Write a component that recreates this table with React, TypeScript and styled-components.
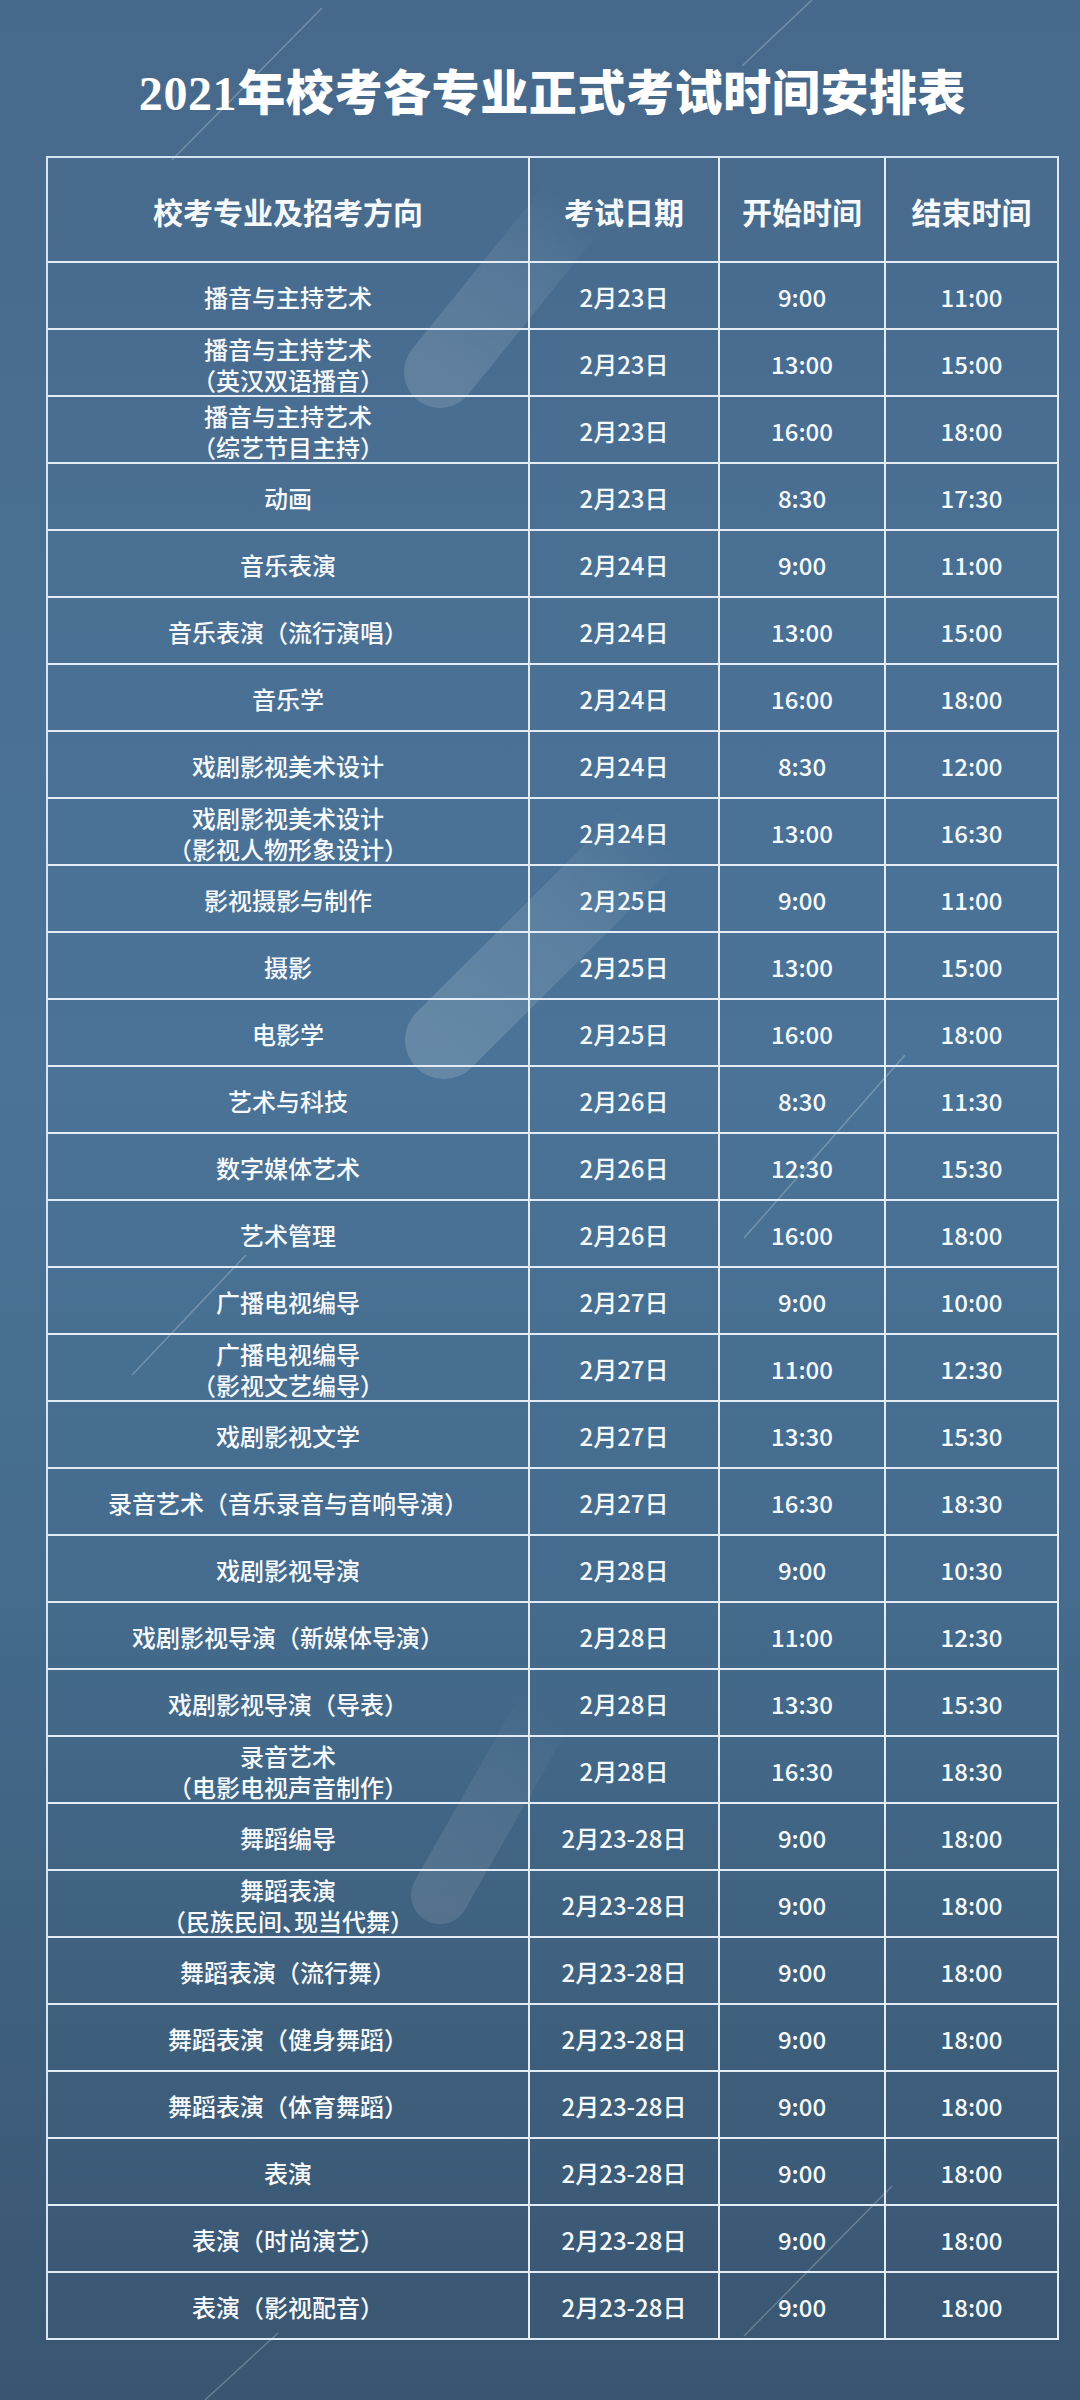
import React from 'react';
import styled, { createGlobalStyle } from 'styled-components';

const GlobalStyle = createGlobalStyle`
  html, body {
    margin: 0;
    padding: 0;
    background: #3d5d7a;
  }
  * {
    box-sizing: border-box;
  }
`;

const Page = styled.div`
  position: relative;
  width: 1080px;
  height: 2400px;
  overflow: hidden;
  padding-left: 46px;
  background: linear-gradient(
    180deg,
    #47698b 0%,
    #4a7195 30%,
    #4a7397 45%,
    #456c8e 65%,
    #3e5f7c 85%,
    #395571 100%
  );
  font-family: 'Noto Sans CJK SC', 'Noto Sans', sans-serif;
  color: #f6f9fc;
`;

const Decor = styled.svg`
  position: absolute;
  left: 0;
  top: 0;
  width: 1080px;
  height: 2400px;
  pointer-events: none;
`;

const Content = styled.div`
  position: relative;
  width: 1013px;
`;

const Title = styled.h1`
  margin: 0;
  padding-top: 70px;
  height: 118px;
  font-family: 'Liberation Serif', 'Noto Sans CJK SC', serif;
  font-size: 48px;
  line-height: 48px;
  font-weight: 900;
  letter-spacing: 0.6px;
  text-align: center;
  color: #ffffff;
  white-space: nowrap;
`;

const Table = styled.div`
  margin-top: 38px;
  display: grid;
  grid-template-columns: 482px 190px 166px 173px;
  border-top: 2px solid #d5e4f1;
  border-left: 2px solid #d5e4f1;
`;

const Cell = styled.div<{ $head?: boolean }>`
  display: flex;
  flex-direction: column;
  align-items: center;
  justify-content: center;
  height: ${(p) => (p.$head ? '105px' : '67px')};
  border-right: 2px solid #e4edf5;
  border-bottom: 2px solid #e4edf5;
  text-align: center;
  white-space: nowrap;
  font-size: ${(p) => (p.$head ? '30px' : '24px')};
  font-weight: ${(p) => (p.$head ? 700 : 500)};
  line-height: 31px;
  padding-top: ${(p) => (p.$head ? '4px' : '2px')};
`;

const Line = styled.span<{ $halt?: boolean }>`
  display: block;
  font-feature-settings: ${(p) => (p.$halt ? "'halt'" : 'normal')};
`;

type Row = [string[], string, string, string];

const rows: Row[] = [
  [['播音与主持艺术'], '2月23日', '9:00', '11:00'],
  [['播音与主持艺术', '（英汉双语播音）'], '2月23日', '13:00', '15:00'],
  [['播音与主持艺术', '（综艺节目主持）'], '2月23日', '16:00', '18:00'],
  [['动画'], '2月23日', '8:30', '17:30'],
  [['音乐表演'], '2月24日', '9:00', '11:00'],
  [['音乐表演（流行演唱）'], '2月24日', '13:00', '15:00'],
  [['音乐学'], '2月24日', '16:00', '18:00'],
  [['戏剧影视美术设计'], '2月24日', '8:30', '12:00'],
  [['戏剧影视美术设计', '（影视人物形象设计）'], '2月24日', '13:00', '16:30'],
  [['影视摄影与制作'], '2月25日', '9:00', '11:00'],
  [['摄影'], '2月25日', '13:00', '15:00'],
  [['电影学'], '2月25日', '16:00', '18:00'],
  [['艺术与科技'], '2月26日', '8:30', '11:30'],
  [['数字媒体艺术'], '2月26日', '12:30', '15:30'],
  [['艺术管理'], '2月26日', '16:00', '18:00'],
  [['广播电视编导'], '2月27日', '9:00', '10:00'],
  [['广播电视编导', '（影视文艺编导）'], '2月27日', '11:00', '12:30'],
  [['戏剧影视文学'], '2月27日', '13:30', '15:30'],
  [['录音艺术（音乐录音与音响导演）'], '2月27日', '16:30', '18:30'],
  [['戏剧影视导演'], '2月28日', '9:00', '10:30'],
  [['戏剧影视导演（新媒体导演）'], '2月28日', '11:00', '12:30'],
  [['戏剧影视导演（导表）'], '2月28日', '13:30', '15:30'],
  [['录音艺术', '（电影电视声音制作）'], '2月28日', '16:30', '18:30'],
  [['舞蹈编导'], '2月23-28日', '9:00', '18:00'],
  [['舞蹈表演', '（民族民间、现当代舞）'], '2月23-28日', '9:00', '18:00'],
  [['舞蹈表演（流行舞）'], '2月23-28日', '9:00', '18:00'],
  [['舞蹈表演（健身舞蹈）'], '2月23-28日', '9:00', '18:00'],
  [['舞蹈表演（体育舞蹈）'], '2月23-28日', '9:00', '18:00'],
  [['表演'], '2月23-28日', '9:00', '18:00'],
  [['表演（时尚演艺）'], '2月23-28日', '9:00', '18:00'],
  [['表演（影视配音）'], '2月23-28日', '9:00', '18:00'],
];

const headers = ['校考专业及招考方向', '考试日期', '开始时间', '结束时间'];

// soft diagonal light streaks behind the table
const bars = [
  { id: 'a', x1: 440, y1: 372, x2: 575, y2: 205, w: 72, o: 0.13 },
  { id: 'b', x1: 444, y1: 1040, x2: 655, y2: 830, w: 78, o: 0.15 },
  { id: 'c', x1: 440, y1: 1895, x2: 548, y2: 1705, w: 58, o: 0.1 },
];

const streaks = [
  [812, 0, 742, 66],
  [322, 8, 172, 160],
  [246, 1255, 132, 1375],
  [905, 1055, 744, 1238],
  [892, 2186, 744, 2336],
  [278, 2333, 205, 2400],
];

const Background = () => (
  <Decor viewBox="0 0 1080 2400">
    <defs>
      {bars.map((b) => (
        <linearGradient
          key={b.id}
          id={`bar-${b.id}`}
          gradientUnits="userSpaceOnUse"
          x1={b.x1}
          y1={b.y1}
          x2={b.x2}
          y2={b.y2}
        >
          <stop offset="0" stopColor="#ffffff" stopOpacity={b.o} />
          <stop offset="0.6" stopColor="#ffffff" stopOpacity={b.o * 0.6} />
          <stop offset="1" stopColor="#ffffff" stopOpacity="0" />
        </linearGradient>
      ))}
    </defs>
    {bars.map((b) => (
      <line
        key={b.id}
        x1={b.x1}
        y1={b.y1}
        x2={b.x2}
        y2={b.y2}
        stroke={`url(#bar-${b.id})`}
        strokeWidth={b.w}
        strokeLinecap="round"
      />
    ))}
    {streaks.map(([x1, y1, x2, y2], i) => (
      <line
        key={i}
        x1={x1}
        y1={y1}
        x2={x2}
        y2={y2}
        stroke="#ffffff"
        strokeOpacity="0.24"
        strokeWidth="1.5"
      />
    ))}
  </Decor>
);

const App: React.FC = () => {
  return (
    <>
      <GlobalStyle />
      <Page>
        <Background />
        <Content>
          <Title>2021年校考各专业正式考试时间安排表</Title>
          <Table>
            {headers.map((h) => (
              <Cell key={h} $head>
                {h}
              </Cell>
            ))}
            {rows.map(([major, date, start, end], i) => (
              <React.Fragment key={i}>
                <Cell>
                  {major.map((text, j) => (
                    <Line key={j} $halt={j > 0}>
                      {text}
                    </Line>
                  ))}
                </Cell>
                <Cell>{date}</Cell>
                <Cell>{start}</Cell>
                <Cell>{end}</Cell>
              </React.Fragment>
            ))}
          </Table>
        </Content>
      </Page>
    </>
  );
};

export default App;
